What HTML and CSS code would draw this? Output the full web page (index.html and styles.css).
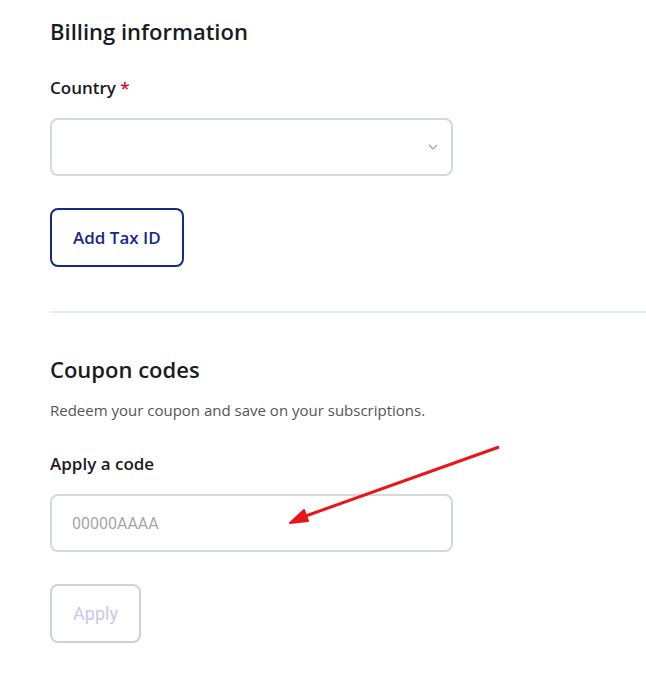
FILE: index.html
```html
<!doctype html>
<html lang="en">
<head>
    <meta charset="UTF-8">
    <title>Billing</title>
    <link rel="stylesheet" href="styles.css">
</head>
<body>
<div class="page">

    <!--账单信息-->
    <section class="section">
        <h2 class="title">Billing information</h2>
        <div class="field">
            <label class="label" for="country">Country <span class="req">*</span></label>
            <div class="select-wrap">
                <select id="country" class="box select"></select>
                <svg class="chev" width="10" height="6" viewBox="0 0 10 6"><path d="M1 1l4 4 4-4" fill="none" stroke="#9aa3ad" stroke-width="1.2"/></svg>
            </div>
        </div>
        <button type="button" class="btn btn-main">Add Tax ID</button>
    </section>

    <hr class="divider">

    <!--优惠码-->
    <section class="section">
        <h2 class="title">Coupon codes</h2>
        <p class="desc">Redeem your coupon and save on your subscriptions.</p>
        <div class="field">
            <label class="label" for="code">Apply a code</label>
            <input id="code" class="box input" type="text" placeholder="00000AAAA">
        </div>
        <button type="button" class="btn btn-off" disabled>Apply</button>
    </section>

    <svg class="arrow" width="240" height="100" viewBox="0 0 240 100">
        <line x1="229" y1="17" x2="30" y2="88" stroke="#e8151b" stroke-width="3"/>
        <path d="M20 93 L34 80 L38 91 Z" fill="#e8151b" stroke="#e8151b" stroke-width="2" stroke-linejoin="round"/>
    </svg>
</div>
</body>
</html>
```

FILE: styles.css
```css
body {
    margin: 0;
    background: #fff;
    font-family: "Open Sans", "Liberation Sans", sans-serif;
    color: #1b1b1f;
}

.page {
    position: relative;
    padding: 15px 0 0 50px;
}

.section {
    width: 403px;
}

.title {
    margin: 0;
    font-size: 22px;
    font-weight: 600;
    line-height: 32px;
}

.field {
    margin-top: 29px;
}

.label {
    display: block;
    font-size: 17px;
    font-weight: 600;
    line-height: 24px;
    margin-bottom: 18px;
}

.req {
    color: #c8102e;
}

.box {
    box-sizing: border-box;
    width: 403px;
    height: 58px;
    border: 2px solid #d2d9e2;
    border-radius: 8px;
    background: #fff;
    outline: none;
}

.select-wrap {
    position: relative;
}

.select {
    appearance: none;
    -webkit-appearance: none;
    display: block;
}

.chev {
    position: absolute;
    right: 15px;
    top: 26px;
}

.input {
    display: block;
    padding: 0 20px;
    font-family: Roboto, "Liberation Sans", sans-serif;
    font-size: 16px;
}

.input::placeholder {
    color: #a3a7ad;
}

.btn {
    box-sizing: border-box;
    height: 59px;
    margin-top: 32px;
    padding: 0 21px;
    border-radius: 8px;
    background: #fff;
    cursor: pointer;
}

.btn-main {
    border: 2px solid #17288a;
    color: #17288a;
    font-family: "Open Sans", sans-serif;
    font-size: 17px;
    font-weight: 600;
}

.btn-off {
    width: 91px;
    border: 2px solid #ccd0e0;
    color: #c5cae8;
    font-family: Roboto, sans-serif;
    font-size: 18px;
    cursor: default;
}

.divider {
    margin: 44px 0 40px 0;
    border: none;
    border-top: 2px solid #e4eaf1;
}

.desc {
    margin: 14px 0 0 0;
    font-size: 15px;
    line-height: 22px;
    color: #555;
}

.desc + .field {
    margin-top: 31px;
}

/*标注箭头*/
.arrow {
    position: absolute;
    left: 270px;
    top: 430px;
}
```
